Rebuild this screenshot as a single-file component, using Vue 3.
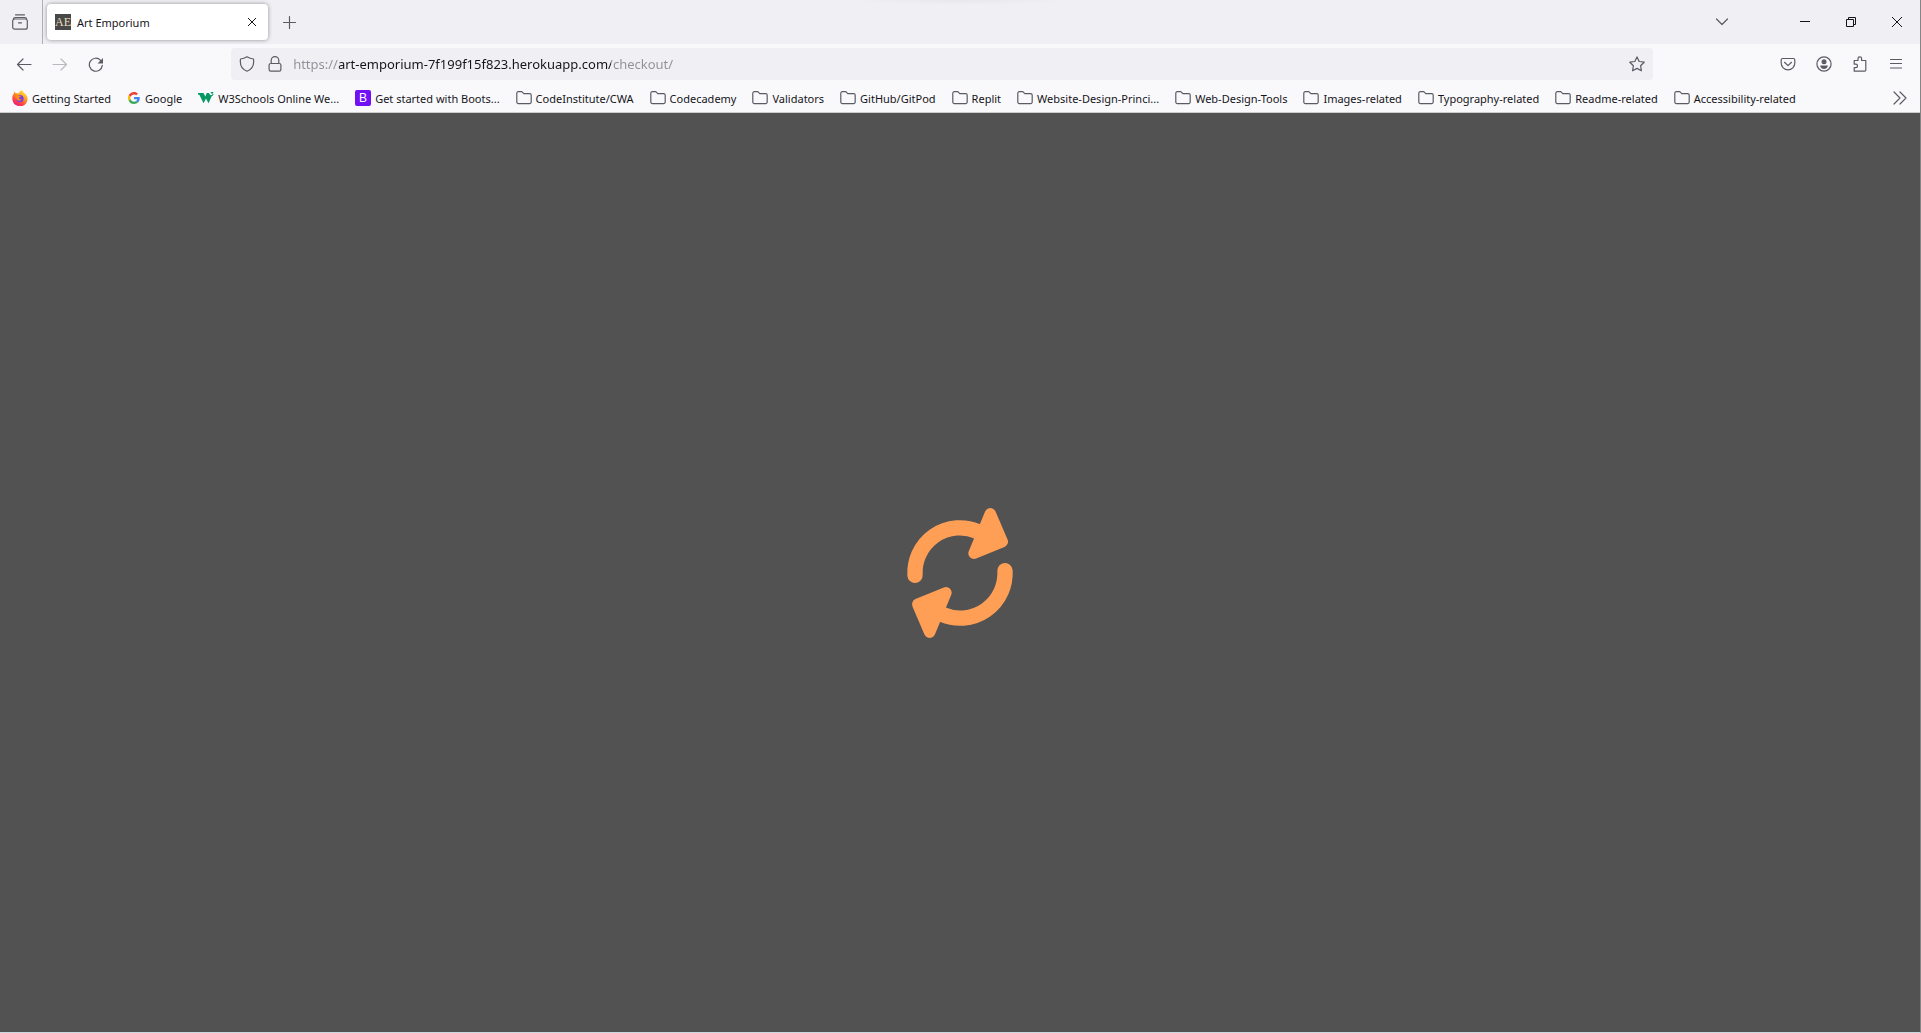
<script setup>
import { ref } from 'vue'

const address = ref('https://art-emporium-7f199f15f823.herokuapp.com/checkout/')

const bookmarks = [
  { label: 'Getting Started', icon: 'firefox' },
  { label: 'Google', icon: 'google' },
  { label: 'W3Schools Online We...', icon: 'w3' },
  { label: 'Get started with Boots...', icon: 'bootstrap' },
]

const folders = [
  'CodeInstitute/CWA',
  'Codecademy',
  'Validators',
  'GitHub/GitPod',
  'Replit',
  'Website-Design-Princi...',
  'Web-Design-Tools',
  'Images-related',
  'Typography-related',
  'Readme-related',
  'Accessibility-related',
]
</script>

<template>
  <div class="browser">
    <header class="chrome">
      <div class="tab-strip">
        <button class="view-button" aria-label="Firefox View">
          <svg class="icon" viewBox="0 0 16 16">
            <path d="M3.500 .8h9M1.500 5c0-1.200.7-1.500 1.700-1.500h9.600c1 0 1.700.3 1.700 1.500M2.700 5h10.600a2 2 0 0 1 2 2v6.200a2 2 0 0 1-2 2H2.700a2 2 0 0 1-2-2V7a2 2 0 0 1 2-2zM6.500 8.800h3" />
          </svg>
        </button>
        <div class="tab">
          <svg class="favicon" viewBox="0 0 16 16" aria-hidden="true">
            <rect width="16" height="16" fill="#484848" />
            <text x="8" y="12" text-anchor="middle" class="favicon-serif">AE</text>
          </svg>
          <button class="tab-title">Art Emporium</button>
          <button class="tab-close" aria-label="Close tab">
            <svg viewBox="0 0 10 10"><path d="M1 1l8 8M9 1L1 9" /></svg>
          </button>
        </div>
        <button class="tool" aria-label="New tab">
          <svg class="icon" viewBox="0 0 16 16"><path d="M8.500 2.500v12M2.500 8.500h12" /></svg>
        </button>
        <div class="drag-area"></div>
        <button class="tool" aria-label="List all tabs">
          <svg class="icon" viewBox="0 0 16 16"><path d="M2.500 5L8 10.500 13.500 5" /></svg>
        </button>
        <div class="window-buttons">
          <button class="window-button" aria-label="Minimize">
            <svg viewBox="0 0 10 10"><path d="M0 4.500h10" /></svg>
          </button>
          <button class="window-button" aria-label="Restore">
            <svg viewBox="0 0 10 10"><path d="M.5 2.500h7v7h-7zM2.500 2.500v-2h7v7h-2" /></svg>
          </button>
          <button class="window-button" aria-label="Close">
            <svg viewBox="0 0 10 10"><path d="M0 0l10 10M10 0L0 10" /></svg>
          </button>
        </div>
      </div>

      <nav class="nav-bar">
        <button class="tool" aria-label="Back">
          <svg class="icon" viewBox="0 0 16 16"><path d="M15 8.500H1.500M7 3L1.500 8.500 7 14" /></svg>
        </button>
        <button class="tool" aria-label="Forward" disabled>
          <svg class="icon" viewBox="0 0 16 16"><path d="M1 8.500h13.500M9 3l5.500 5.500L9 14" /></svg>
        </button>
        <button class="tool" aria-label="Reload">
          <svg class="icon" viewBox="0 0 16 16">
            <path d="M14.300 9.400A6.500 6.500 0 1 1 12.600 4.300" />
            <path class="solid" d="M15 2v5.500H9.500z" />
          </svg>
        </button>
        <div class="spring"></div>
        <div class="url-bar">
          <button class="url-icon" aria-label="Tracking protection">
            <svg class="icon" viewBox="0 0 16 16">
              <path d="M8 .8c2 1.300 4 2 6.500 2.200.7 5-1 10.200-6.500 12.200C2.500 13.200.8 8 1.500 3 4 2.800 6 2.100 8 .8z" />
            </svg>
          </button>
          <button class="url-icon" aria-label="Connection secure">
            <svg class="icon" viewBox="0 0 16 16">
              <path d="M4.200 7.500V4.400a3.800 3.800 0 0 1 7.600 0v3.100M3.700 7.500h8.600a1.600 1.600 0 0 1 1.600 1.600v4.500a1.600 1.600 0 0 1-1.600 1.600H3.700a1.600 1.600 0 0 1-1.600-1.600V9.100a1.600 1.600 0 0 1 1.600-1.600z" />
            </svg>
          </button>
          <input v-model="address" class="url-input" type="text" aria-label="Address" spellcheck="false" />
          <button class="star" aria-label="Bookmark this page">
            <svg class="icon" viewBox="0 0 16 16">
              <path d="M8 .9l2.200 4.600 5 .7-3.600 3.500.8 5.100L8 12.400l-4.400 2.400.8-5.100L.8 6.200l5-.7z" />
            </svg>
          </button>
        </div>
        <div class="spring"></div>
        <button class="tool" aria-label="Save to Pocket">
          <svg class="icon" viewBox="0 0 16 16">
            <path d="M2.600 2.500h10.800a1.400 1.400 0 0 1 1.400 1.400v3.200a6.800 6.800 0 0 1-13.600 0V3.900a1.400 1.400 0 0 1 1.400-1.400zM4.500 6.300L8 9.600l3.500-3.300" />
          </svg>
        </button>
        <button class="tool" aria-label="Account">
          <svg class="icon" viewBox="0 0 16 16">
            <circle cx="8" cy="8" r="7.100" />
            <circle class="solid" cx="8" cy="5.800" r="2.500" />
            <path class="solid" d="M4.200 9.500h7.600c0 2-1.500 3.500-3.800 3.500S4.200 11.500 4.200 9.500z" />
          </svg>
        </button>
        <button class="tool" aria-label="Extensions">
          <svg class="icon" viewBox="0 0 16 16">
            <path d="M2.200 15.200V11.600h1.600a1.700 1.700 0 0 0 0-3.400H2.200V4.500H6V2.600a1.800 1.800 0 0 1 3.600 0v1.900h4.200v9.600a1.100 1.100 0 0 1-1.100 1.100z" />
          </svg>
        </button>
        <button class="tool" aria-label="Menu">
          <svg class="icon" viewBox="0 0 16 16"><path d="M2.500 3.500h11M2.500 7.500h11M2.500 12h11" /></svg>
        </button>
      </nav>

      <div class="bookmarks">
        <a v-for="item in bookmarks" :key="item.label" href="#" class="bookmark">
          <svg v-if="item.icon === 'firefox'" class="favicon" viewBox="0 0 16 16">
            <defs>
              <linearGradient id="flame" x1=".8" y1="0" x2=".2" y2="1">
                <stop offset="0" stop-color="#fff04d" />
                <stop offset=".4" stop-color="#ff9a1f" />
                <stop offset=".75" stop-color="#ff3a4c" />
                <stop offset="1" stop-color="#e6158a" />
              </linearGradient>
            </defs>
            <path fill="url(#flame)" d="M9.300.2c2 1.200 2.700 2.200 3.200 3.300.8.2 1.600 1 2.300 2.300 1.100 2.200 1.100 5-.4 7.100A7.700 7.700 0 0 1 .6 10.400C-.1 7.700.5 5 2 3.300c0-.8.2-1.300.5-1.800.5 1 1 1.500 1.800 1.800.9-.2 1.800-.2 2.600.1C7.100 2.200 8 .9 9.300.2z" />
            <circle cx="8" cy="8.700" r="3.600" fill="#7542e5" />
            <path fill="#ff8a16" d="M3.600 5.300c1.300-.6 2.800-.3 3.600.5h2c-.2 1-1 1.300-2.100 1.600-.2 1.600 1 2.200 2.700 1.600-.7 1.600-2.200 2-3.600 1.500-1.800-.7-2.700-2.800-2.600-5.200z" />
          </svg>
          <svg v-else-if="item.icon === 'google'" class="favicon small" viewBox="0 0 48 48">
            <path fill="#ea4335" d="M24 9.500c3.500 0 6.700 1.200 9.200 3.600l6.900-6.900C35.900 2.400 30.500 0 24 0 14.600 0 6.500 5.400 2.600 13.200l8 6.200C12.400 13.700 17.700 9.500 24 9.500z" />
            <path fill="#4285f4" d="M47 24.600c0-1.600-.2-3.100-.4-4.600H24v9h12.900c-.6 3-2.300 5.500-4.700 7.200l7.700 6C44.400 38 47 32 47 24.600z" />
            <path fill="#fbbc05" d="M10.500 28.600a14.500 14.500 0 0 1 0-9.200l-8-6.200a24 24 0 0 0 0 21.600z" />
            <path fill="#34a853" d="M24 48c6.500 0 11.900-2.100 15.900-5.800l-7.700-6c-2.200 1.500-4.900 2.300-8.200 2.300-6.300 0-11.600-4.200-13.500-9.900l-8 6.200C6.500 42.600 14.600 48 24 48z" />
          </svg>
          <svg v-else-if="item.icon === 'w3'" class="favicon" viewBox="0 0 16 16">
            <path fill="#059862" d="M0 3h5.500l1.800 3.500L8.800 3H11l.8 1.500 2 1.500-3.300 7.200L8 8.500l-2.500 4.700L1.500 5 0 4.500z" />
            <path fill="none" stroke="#059862" stroke-width="1" d="M12.800 2.500H15l-1.200 1.300c2 0 1.700 2.200-.8 1.700" />
          </svg>
          <svg v-else class="favicon" viewBox="0 0 16 16">
            <rect width="16" height="16" rx="2" fill="#7110f5" />
            <text x="8" y="12" text-anchor="middle" class="favicon-sans">B</text>
          </svg>
          <span>{{ item.label }}</span>
        </a>
        <button v-for="name in folders" :key="name" class="bookmark">
          <svg class="icon" viewBox="0 0 16 16">
            <path d="M2.300 1.700h3.500l2 2h5.900a1.500 1.500 0 0 1 1.500 1.500v6.900a1.500 1.500 0 0 1-1.500 1.500H2.300a1.500 1.500 0 0 1-1.500-1.500V3.200a1.500 1.500 0 0 1 1.500-1.500z" />
          </svg>
          <span>{{ name }}</span>
        </button>
        <button class="overflow" aria-label="Show more bookmarks">
          <svg class="icon" viewBox="0 0 16 16"><path d="M2 2l6 6-6 6M8 2l6 6-6 6" /></svg>
        </button>
      </div>
    </header>

    <main class="page">
      <svg class="spinner" viewBox="0 0 420 498" role="img" aria-label="Processing payment">
        <g id="arrow">
          <path class="arc" d="M75 256A135 135 0 0 1 262 124" />
          <path class="head" d="M301 71L337 155 252 190z" />
        </g>
        <use href="#arrow" transform="rotate(180 210 249)" />
      </svg>
    </main>
  </div>
</template>

<style>
body {
  margin: 0;
}
</style>

<style scoped>
.browser {
  display: flex;
  flex-direction: column;
  box-sizing: border-box;
  min-height: 100vh;
  border-right: 1px solid #858585;
  border-bottom: 1px solid #c9d9df;
  background: #525252;
  color: #15141a;
  font-family: "Noto Sans", "Open Sans", sans-serif;
  font-size: 11px;
}

button,
input {
  margin: 0;
  padding: 0;
  border: 0;
  background: none;
  color: inherit;
  font: inherit;
}

.chrome {
  border-bottom: 1px solid #ccccce;
  background: #f9f9fb;
}

svg {
  display: block;
  flex: none;
}

.icon {
  width: 16px;
  height: 16px;
  fill: none;
  stroke: #5b5b66;
  stroke-width: 1.2;
  stroke-linecap: round;
  stroke-linejoin: round;
}

.solid {
  fill: #5b5b66;
  stroke: none;
}

.favicon {
  width: 16px;
  height: 16px;
}

.favicon.small {
  width: 12px;
  height: 12px;
  margin: 0 1px;
}

.favicon-serif {
  fill: #e6dfb8;
  font-family: "Liberation Serif", serif;
  font-size: 12px;
}

.favicon-sans {
  fill: #fff;
  font-family: "Liberation Sans", sans-serif;
  font-size: 12px;
}

.tab-strip {
  display: flex;
  align-items: center;
  height: 44px;
  background:
    radial-gradient(ellipse 112px 5px at 50% 0, #e8e8ec, #f0f0f4) top / 100% 5px no-repeat,
    #f0f0f4;
}

.view-button {
  display: flex;
  align-items: center;
  justify-content: center;
  width: 43px;
  height: 44px;
  padding-right: 2px;
  border-right: 1px solid #b0b0b4;
}

.tab {
  display: flex;
  align-items: center;
  box-sizing: border-box;
  width: 221px;
  height: 36px;
  margin: 0 3px 0 4px;
  padding: 0 8px;
  border-radius: 4px;
  background: #fff;
  box-shadow: 0 0 4px rgba(0, 0, 0, 0.4);
}

.tab-title {
  flex: 1;
  padding-left: 6px;
  text-align: left;
}

.tab-close {
  display: flex;
  align-items: center;
  justify-content: center;
  width: 16px;
  height: 24px;
}

.tab-close svg,
.window-button svg {
  width: 10px;
  height: 10px;
  fill: none;
  stroke: #15141a;
  stroke-width: 1;
}

.tool {
  display: flex;
  align-items: center;
  justify-content: center;
  flex: none;
  width: 36px;
  height: 32px;
}

.tool:disabled {
  opacity: 0.4;
}

.drag-area {
  flex: 1;
}

.window-buttons {
  display: flex;
  margin-left: 42px;
}

.window-button {
  display: flex;
  align-items: center;
  justify-content: center;
  width: 46px;
  height: 44px;
}

.nav-bar {
  display: flex;
  align-items: center;
  height: 40px;
  padding: 0 6px;
}

.spring {
  flex: 7 1 0;
}

.url-bar {
  display: flex;
  align-items: center;
  box-sizing: border-box;
  flex: 84 1 0;
  height: 32px;
  padding: 0 8px;
  border-radius: 4px;
  background: #f0f0f4;
}

.url-icon {
  width: 16px;
  margin-right: 12px;
}

.url-input {
  flex: 1;
  min-width: 0;
  height: 32px;
  margin-left: -2px;
  outline: 0;
  background: linear-gradient(90deg, #8f8f99 46px, #15141a 46px 318px, #8f8f99 318px);
  background-clip: text;
  -webkit-text-fill-color: transparent;
  font-size: 13px;
}

.bookmarks {
  display: flex;
  align-items: center;
  height: 28px;
  gap: 16px;
  padding: 0 12px;
}

.bookmark {
  display: flex;
  align-items: center;
  gap: 4px;
  color: inherit;
  white-space: nowrap;
  text-decoration: none;
}

.overflow {
  margin-left: auto;
}

.page {
  display: flex;
  flex: 1;
  align-items: center;
  justify-content: center;
}

.spinner {
  width: 140px;
  height: 166px;
}

.arc {
  fill: none;
  stroke: #ff9f56;
  stroke-width: 46;
  stroke-linecap: round;
}

.head {
  fill: #ff9f56;
  stroke: #ff9f56;
  stroke-width: 34;
  stroke-linejoin: round;
}
</style>
